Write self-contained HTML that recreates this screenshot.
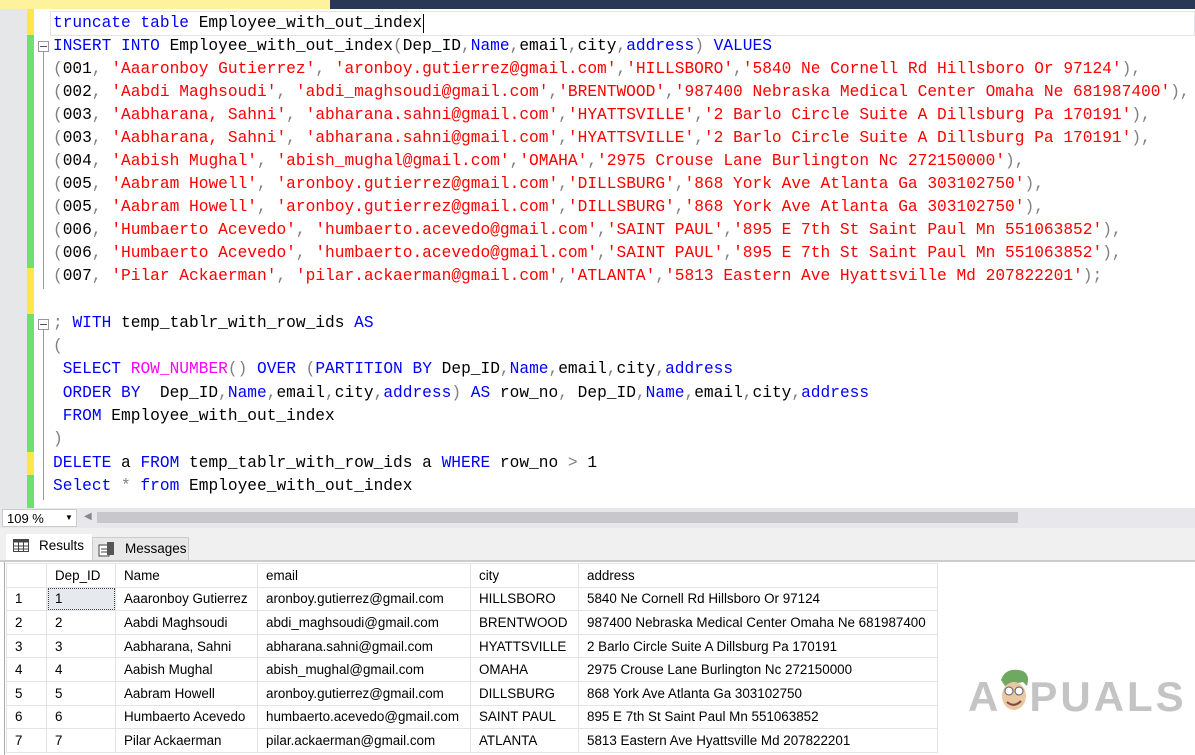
<!DOCTYPE html>
<html><head><meta charset="utf-8"><style>
*{margin:0;padding:0;box-sizing:border-box}
body{width:1195px;height:755px;overflow:hidden;background:#fff;position:relative;font-family:"Liberation Sans",sans-serif}
.abs{position:absolute}
.code{position:absolute;left:53px;font-family:"Liberation Mono",monospace;font-size:16.2px;white-space:pre;line-height:23px;color:#000}
.k{color:#0000ff}.s{color:#ff0000}.g{color:#808080}.f{color:#ff00ff}
.bar{position:absolute;left:27px;width:7px}
table{border-collapse:collapse;font-size:13.4px;position:absolute;left:6px;top:563px}
td{border:1px solid #e4e4e4;height:23.6px;padding:0 0 0 8px;white-space:nowrap;color:#000}
tr.h td{background:#fff;color:#000}
</style></head><body>
<div class="abs" style="left:0;top:0;width:330px;height:9px;background:#fff29d"></div>
<div class="abs" style="left:330px;top:0;width:865px;height:9px;background:#293955"></div>
<div class="abs" style="left:0;top:9px;width:27px;height:499px;background:#e6e7e8"></div>
<div class="bar" style="top:9px;height:26px;background:#fde74c"></div>
<div class="bar" style="top:35px;height:233px;background:#6ee06e"></div>
<div class="bar" style="top:268px;height:46px;background:#fde74c"></div>
<div class="bar" style="top:314px;height:138px;background:#6ee06e"></div>
<div class="bar" style="top:452px;height:23px;background:#fde74c"></div>
<div class="bar" style="top:475px;height:33px;background:#6ee06e"></div>
<div class="abs" style="left:50px;top:11px;width:1145px;height:25px;border:1px solid #e2e2e8"></div>
<div class="abs" style="left:43px;top:52px;width:1px;height:237px;background:#999"></div>
<div class="abs" style="left:43px;top:330px;width:1px;height:170px;background:#999"></div>
<div class="abs" style="left:38px;top:41px;width:11px;height:11px;border:1px solid #999;background:#fff"></div>
<div class="abs" style="left:40px;top:46px;width:7px;height:1px;background:#555"></div>
<div class="abs" style="left:38px;top:319px;width:11px;height:11px;border:1px solid #999;background:#fff"></div>
<div class="abs" style="left:40px;top:324px;width:7px;height:1px;background:#555"></div>
<div class="code" style="top:12px"><span class="k">truncate table</span> Employee_with_out_index</div>
<div class="abs" style="left:423px;top:14px;width:1px;height:19px;background:#000"></div>
<div class="code" style="top:35px"><span class="k">INSERT INTO</span> Employee_with_out_index<span class="g">(</span>Dep_ID<span class="g">,</span><span class="k">Name</span><span class="g">,</span>email<span class="g">,</span>city<span class="g">,</span><span class="k">address</span><span class="g">)</span> <span class="k">VALUES</span></div>
<div class="code" style="top:58px"><span class="g">(</span>001<span class="g">,</span> <span class="s">'Aaaronboy Gutierrez'</span><span class="g">,</span> <span class="s">'aronboy.gutierrez@gmail.com'</span><span class="g">,</span><span class="s">'HILLSBORO'</span><span class="g">,</span><span class="s">'5840 Ne Cornell Rd Hillsboro Or 97124'</span><span class="g">),</span></div>
<div class="code" style="top:81px"><span class="g">(</span>002<span class="g">,</span> <span class="s">'Aabdi Maghsoudi'</span><span class="g">,</span> <span class="s">'abdi_maghsoudi@gmail.com'</span><span class="g">,</span><span class="s">'BRENTWOOD'</span><span class="g">,</span><span class="s">'987400 Nebraska Medical Center Omaha Ne 681987400'</span><span class="g">),</span></div>
<div class="code" style="top:104px"><span class="g">(</span>003<span class="g">,</span> <span class="s">'Aabharana, Sahni'</span><span class="g">,</span> <span class="s">'abharana.sahni@gmail.com'</span><span class="g">,</span><span class="s">'HYATTSVILLE'</span><span class="g">,</span><span class="s">'2 Barlo Circle Suite A Dillsburg Pa 170191'</span><span class="g">),</span></div>
<div class="code" style="top:127px"><span class="g">(</span>003<span class="g">,</span> <span class="s">'Aabharana, Sahni'</span><span class="g">,</span> <span class="s">'abharana.sahni@gmail.com'</span><span class="g">,</span><span class="s">'HYATTSVILLE'</span><span class="g">,</span><span class="s">'2 Barlo Circle Suite A Dillsburg Pa 170191'</span><span class="g">),</span></div>
<div class="code" style="top:150px"><span class="g">(</span>004<span class="g">,</span> <span class="s">'Aabish Mughal'</span><span class="g">,</span> <span class="s">'abish_mughal@gmail.com'</span><span class="g">,</span><span class="s">'OMAHA'</span><span class="g">,</span><span class="s">'2975 Crouse Lane Burlington Nc 272150000'</span><span class="g">),</span></div>
<div class="code" style="top:173px"><span class="g">(</span>005<span class="g">,</span> <span class="s">'Aabram Howell'</span><span class="g">,</span> <span class="s">'aronboy.gutierrez@gmail.com'</span><span class="g">,</span><span class="s">'DILLSBURG'</span><span class="g">,</span><span class="s">'868 York Ave Atlanta Ga 303102750'</span><span class="g">),</span></div>
<div class="code" style="top:196px"><span class="g">(</span>005<span class="g">,</span> <span class="s">'Aabram Howell'</span><span class="g">,</span> <span class="s">'aronboy.gutierrez@gmail.com'</span><span class="g">,</span><span class="s">'DILLSBURG'</span><span class="g">,</span><span class="s">'868 York Ave Atlanta Ga 303102750'</span><span class="g">),</span></div>
<div class="code" style="top:219px"><span class="g">(</span>006<span class="g">,</span> <span class="s">'Humbaerto Acevedo'</span><span class="g">,</span> <span class="s">'humbaerto.acevedo@gmail.com'</span><span class="g">,</span><span class="s">'SAINT PAUL'</span><span class="g">,</span><span class="s">'895 E 7th St Saint Paul Mn 551063852'</span><span class="g">),</span></div>
<div class="code" style="top:242px"><span class="g">(</span>006<span class="g">,</span> <span class="s">'Humbaerto Acevedo'</span><span class="g">,</span> <span class="s">'humbaerto.acevedo@gmail.com'</span><span class="g">,</span><span class="s">'SAINT PAUL'</span><span class="g">,</span><span class="s">'895 E 7th St Saint Paul Mn 551063852'</span><span class="g">),</span></div>
<div class="code" style="top:265px"><span class="g">(</span>007<span class="g">,</span> <span class="s">'Pilar Ackaerman'</span><span class="g">,</span> <span class="s">'pilar.ackaerman@gmail.com'</span><span class="g">,</span><span class="s">'ATLANTA'</span><span class="g">,</span><span class="s">'5813 Eastern Ave Hyattsville Md 207822201'</span><span class="g">);</span></div>
<div class="code" style="top:312px"><span class="g">;</span> <span class="k">WITH</span> temp_tablr_with_row_ids <span class="k">AS</span></div>
<div class="code" style="top:335px"><span class="g">(</span></div>
<div class="code" style="top:358px"> <span class="k">SELECT</span> <span class="f">ROW_NUMBER</span><span class="g">()</span> <span class="k">OVER</span> <span class="g">(</span><span class="k">PARTITION BY</span> Dep_ID<span class="g">,</span><span class="k">Name</span><span class="g">,</span>email<span class="g">,</span>city<span class="g">,</span><span class="k">address</span></div>
<div class="code" style="top:382px"> <span class="k">ORDER BY</span>  Dep_ID<span class="g">,</span><span class="k">Name</span><span class="g">,</span>email<span class="g">,</span>city<span class="g">,</span><span class="k">address</span><span class="g">)</span> <span class="k">AS</span> row_no<span class="g">,</span> Dep_ID<span class="g">,</span><span class="k">Name</span><span class="g">,</span>email<span class="g">,</span>city<span class="g">,</span><span class="k">address</span></div>
<div class="code" style="top:405px"> <span class="k">FROM</span> Employee_with_out_index</div>
<div class="code" style="top:428px"><span class="g">)</span></div>
<div class="code" style="top:452px"><span class="k">DELETE</span> a <span class="k">FROM</span> temp_tablr_with_row_ids a <span class="k">WHERE</span> row_no <span class="g">&gt;</span> 1</div>
<div class="code" style="top:475px"><span class="k">Select</span> <span class="g">*</span> <span class="k">from</span> Employee_with_out_index</div>
<div class="abs" style="left:0;top:508px;width:1195px;height:20px;background:#e8e8ec"></div>
<div class="abs" style="left:2px;top:509px;width:75px;height:18px;background:#fff;border:1px solid #ccc;font-size:13px;padding:1px 0 0 4px">109 %<span style="position:absolute;left:62px;top:3px;font-size:8px">▼</span></div>
<div class="abs" style="left:84px;top:511px;font-size:10px;color:#888">◀</div>
<div class="abs" style="left:97px;top:512px;width:921px;height:11px;background:#c8c8cc"></div>
<div class="abs" style="left:0;top:528px;width:1195px;height:34px;background:#f0f0f0"></div>
<div class="abs" style="left:6px;top:534px;width:86px;height:28px;background:#fff;font-size:13.5px;padding:4px 0 0 33px">Results</div>
<svg class="abs" style="left:13px;top:539px" width="16" height="13"><rect x="0.5" y="0.5" width="15" height="12" fill="#fff" stroke="#444"/><rect x="0.5" y="0.5" width="15" height="3" fill="#444"/><path d="M5.5 0v13M10.5 0v13M0 7h16M0 10h16" stroke="#444"/></svg>
<div class="abs" style="left:92px;top:537px;width:97px;height:25px;background:#e8e8e8;border:1px solid #ccc;border-bottom:none;font-size:13.5px;padding:3px 0 0 32px">Messages</div>
<svg class="abs" style="left:98px;top:541px" width="18" height="16"><rect x="1" y="4" width="10" height="11" fill="#fff" stroke="#444"/><path d="M3 8h6M3 11h6" stroke="#444"/><rect x="9" y="1" width="7" height="13" fill="#555"/></svg>
<div class="abs" style="left:0;top:560px;width:1195px;height:2px;background:#ccc"></div>
<div class="abs" style="left:4px;top:562px;width:1px;height:193px;background:#aaa"></div>
<table>
<tr class="h"><td style="width:40px"></td><td style="width:69px">Dep_ID</td><td style="width:142px">Name</td><td style="width:213px">email</td><td style="width:108px">city</td><td style="width:359px">address</td></tr>
<tr><td>1</td><td style="background:#e6eaee;outline:1px dotted #444;outline-offset:-2px">1</td><td>Aaaronboy Gutierrez</td><td>aronboy.gutierrez@gmail.com</td><td>HILLSBORO</td><td>5840 Ne Cornell Rd Hillsboro Or 97124</td></tr>
<tr><td>2</td><td>2</td><td>Aabdi Maghsoudi</td><td>abdi_maghsoudi@gmail.com</td><td>BRENTWOOD</td><td>987400 Nebraska Medical Center Omaha Ne 681987400</td></tr>
<tr><td>3</td><td>3</td><td>Aabharana, Sahni</td><td>abharana.sahni@gmail.com</td><td>HYATTSVILLE</td><td>2 Barlo Circle Suite A Dillsburg Pa 170191</td></tr>
<tr><td>4</td><td>4</td><td>Aabish Mughal</td><td>abish_mughal@gmail.com</td><td>OMAHA</td><td>2975 Crouse Lane Burlington Nc 272150000</td></tr>
<tr><td>5</td><td>5</td><td>Aabram Howell</td><td>aronboy.gutierrez@gmail.com</td><td>DILLSBURG</td><td>868 York Ave Atlanta Ga 303102750</td></tr>
<tr><td>6</td><td>6</td><td>Humbaerto Acevedo</td><td>humbaerto.acevedo@gmail.com</td><td>SAINT PAUL</td><td>895 E 7th St Saint Paul Mn 551063852</td></tr>
<tr><td>7</td><td>7</td><td>Pilar Ackaerman</td><td>pilar.ackaerman@gmail.com</td><td>ATLANTA</td><td>5813 Eastern Ave Hyattsville Md 207822201</td></tr>
</table>
<div class="abs" style="left:968px;top:672px;font-size:42px;line-height:50px;font-weight:bold;color:#c4c4c4;letter-spacing:3px;white-space:nowrap">A<span style="display:inline-block;width:28px"></span>PUALS</div>
<svg class="abs" style="left:995px;top:666px" width="40" height="52"><path d="M6 14 Q10 2 24 4 Q36 6 32 20 L28 16 L10 20Z" fill="#6fa860"/><ellipse cx="19" cy="30" rx="12" ry="14" fill="#e9c9a0"/><circle cx="14" cy="25" r="4" fill="#fff" stroke="#557" /><circle cx="24" cy="25" r="4" fill="#fff" stroke="#557"/><path d="M12 36 Q19 42 26 35" stroke="#844" fill="none" stroke-width="2"/></svg>
</body></html>
